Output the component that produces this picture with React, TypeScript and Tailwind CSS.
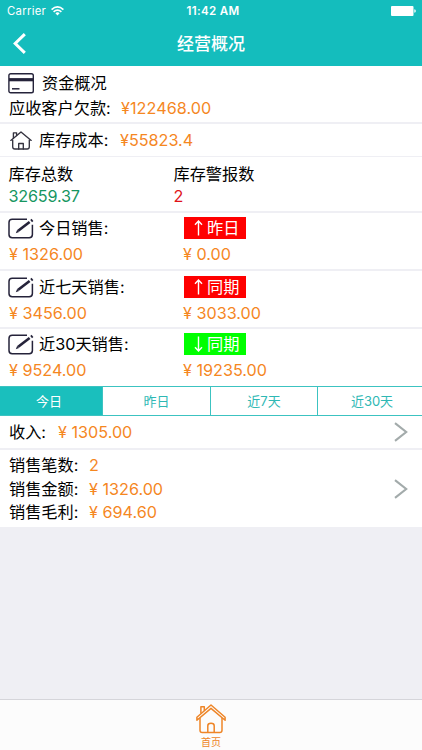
import { useState } from 'react';

const sales = [
  { label: '今日销售:', value: '¥ 1326.00', compare: '昨日', compareValue: '¥ 0.00', up: true },
  { label: '近七天销售:', value: '¥ 3456.00', compare: '同期', compareValue: '¥ 3033.00', up: true },
  { label: '近30天销售:', value: '¥ 9524.00', compare: '同期', compareValue: '¥ 19235.00', up: false },
];

const tabs = ['今日', '昨日', '近7天', '近30天'];

const totals = [
  { label: '销售笔数:', value: '2' },
  { label: '销售金额:', value: '¥ 1326.00' },
  { label: '销售毛利:', value: '¥ 694.60' },
];

const CardIcon = () => (
  <svg className="w-[26px] h-[21px] shrink-0" viewBox="0 0 26 21" fill="none" stroke="#25233a">
    <rect x="0.9" y="0.8" width="24.4" height="19" rx="1.8" strokeWidth="1.4" />
    <path d="M1 6.7h24.3" strokeWidth="3.2" />
    <path d="M4 15.8h7.5" strokeWidth="1.5" />
  </svg>
);

const HouseIcon = () => (
  <svg className="w-[22px] h-[19px] shrink-0" viewBox="0 0 22 19" fill="none" stroke="#34333f" strokeWidth="1.35" strokeLinejoin="round" strokeLinecap="round">
    <path d="M0.8 9.4L11 1l10.2 8.4" />
    <path d="M3.4 7.2V1.8h3.2v2.8" />
    <path d="M2.7 9.2v6.6q0 2.2 2.2 2.2h12.2q2.2 0 2.2-2.2V9.2" />
    <path d="M8.7 18v-5.5h4.6V18" />
  </svg>
);

const EditIcon = () => (
  <svg className="w-[26px] h-[21px] shrink-0" viewBox="0 0 26 21" fill="none" stroke="#25233a">
    <path d="M19 1.2H4.2Q1 1.2 1 4.4v12.2q0 3.2 3.2 3.2h17q3.2 0 3.2-3.2V6.8" strokeWidth="1.5" />
    <path d="M10.2 12.8L21.6 4" strokeWidth="2.7" />
    <path d="M7.8 15.2l1.4-3.5 1.9 2.3z" fill="#25233a" stroke="none" />
    <path d="M22.9 1.4l1.8 2.2" strokeWidth="1.7" />
  </svg>
);

const HomeTabIcon = () => (
  <svg className="w-[30px] h-[30px]" viewBox="0 0 30 30" fill="none" stroke="#ee8527" strokeWidth="1.5" strokeLinejoin="round">
    <path d="M15 1L0.9 13.2v3.1L15 4.4l14.1 11.9v-3.1z" />
    <path d="M4.9 9.6V2.8h3.4v3.9" />
    <path d="M4 14v12.2q0 2.3 2.3 2.3h17.4q2.3 0 2.3-2.3V14" />
    <path d="M11.8 28.3v-6.6q0-2.4 3.2-2.4t3.2 2.4v6.6" />
  </svg>
);

const Chevron = () => (
  <svg className="w-[14px] h-[20px]" viewBox="0 0 14 20" fill="none" stroke="#a3abab" strokeWidth="2.1">
    <path d="M1 1.2L12.2 10 1 18.8" />
  </svg>
);

const App = () => {
  const [active, setActive] = useState(0);

  return (
    <div className="flex flex-col w-[422px] h-[750px] overflow-hidden bg-[#efeff4] text-black text-[16.2px] leading-6 whitespace-nowrap font-['Inter','Noto_Sans_CJK_SC',sans-serif]">
      {/* Status bar and title */}
      <header className="h-[66px] shrink-0 bg-[#14bdbd] text-white">
        <div className="h-[22px] grid grid-cols-3 items-center pl-[7px] pr-[6px] text-[11.3px] leading-[22px]">
          <div className="flex items-center gap-[5px]">
            <span className="tracking-[0.3px]">Carrier</span>
            <svg className="w-[13px] h-[10px]" viewBox="0 0 13 10" fill="none" stroke="white" strokeWidth="1.7">
              <path d="M0.6 3.6Q6.5 -1.8 12.4 3.6" />
              <path d="M2.6 5.8Q6.5 2.4 10.4 5.8" />
              <path d="M4.4 7.2Q6.5 5.5 8.6 7.2L6.5 9.6z" fill="white" stroke="none" />
            </svg>
          </div>
          <span className="pl-[3px] text-center text-[11.6px] font-semibold tracking-[0.3px]">11:42 AM</span>
          <svg className="w-[25px] h-[10px] justify-self-end" viewBox="0 0 25 10" fill="white">
            <rect width="22.5" height="10" rx="1" />
            <path d="M23.3 3.2q1.5 0 1.5 1.8t-1.5 1.8z" />
          </svg>
        </div>
        <div className="h-[44px] grid grid-cols-[60px_1fr_60px] items-center">
          <svg className="w-[13px] h-[21px] ml-[13px] mt-[-2px]" viewBox="0 0 13 21" fill="none" stroke="white" strokeWidth="3">
            <path d="M11.8 1.2L2.2 10.5l9.6 9.3" />
          </svg>
          <h1 className="text-center text-[17px] font-medium">经营概况</h1>
        </div>
      </header>

      {/* Funds */}
      <section className="h-[58px] shrink-0 bg-white border-b-2 border-[#efeff4] pl-[8px] pt-[5px]">
        <div className="flex items-center h-[24px] gap-[8px]">
          <CardIcon />
          <span>资金概况</span>
        </div>
        <div className="flex items-center h-[25px] pl-[1px]">
          <span className="w-[112px]">应收客户欠款:</span>
          <span className="text-[#f5871f] tracking-[0.05px]">¥122468.00</span>
        </div>
      </section>

      {/* Stock */}
      <section className="h-[33px] shrink-0 flex items-center bg-white border-b border-[#efeff4] pl-[10px]">
        <HouseIcon />
        <span className="ml-[7px] w-[81px]">库存成本:</span>
        <span className="text-[#f5871f]">¥55823.4</span>
      </section>
      <section className="h-[56px] shrink-0 flex bg-white border-b-2 border-[#efeff4] pl-[8.5px] pt-[6px] leading-[22px]">
        <div className="w-[165px]">
          <p>库存总数</p>
          <p className="text-[#17965f] tracking-[-0.2px]">32659.37</p>
        </div>
        <div>
          <p>库存警报数</p>
          <p className="text-[#e01218]">2</p>
        </div>
      </section>

      {/* Sales compared with the previous period */}
      {sales.map((item, i) => (
        <section
          key={item.label}
          className={`shrink-0 bg-white pl-[8px] ${i === 1 ? 'pt-[4px]' : 'pt-[3px]'} ${i === 2 ? 'h-[57px]' : 'h-[58px] border-b-2 border-[#efeff4]'}`}
        >
          <div className="flex items-center h-[24px]">
            <EditIcon />
            <span className="ml-[5px] w-[145px]">{item.label}</span>
            <span className={`flex items-center self-start mt-px w-[62px] h-[22px] pl-[9px] text-white leading-[22px] ${item.up ? 'bg-[#ff0000]' : 'bg-[#00ff00]'}`}>
              <svg className="w-[11px] h-[16px] mr-[3px]" viewBox="0 0 11 16" fill="none" stroke="white" strokeWidth="1.4">
                <path d={item.up ? 'M5.5 15.5V1M2 4.8L5.5 1 9 4.8' : 'M5.5 0.5V15M2 11.2L5.5 15 9 11.2'} />
              </svg>
              {item.compare}
            </span>
          </div>
          <div className={`flex items-center text-[#f5871f] pl-[1px] ${i === 1 ? 'h-[27px]' : 'h-[28px]'}`}>
            <span className="w-[174px]">{item.value}</span>
            <span>{item.compareValue}</span>
          </div>
        </section>
      ))}

      {/* Period tabs */}
      <div className="h-[30px] shrink-0 grid grid-cols-[103px_108px_107px_104px] bg-white border-y border-[#3cc3c1] text-[13px]">
        {tabs.map((tab, i) => (
          <button
            key={tab}
            onClick={() => setActive(i)}
            className={`${i < 3 ? 'border-r border-[#3cc3c1]' : 'pl-[4px]'} ${i === 0 ? 'pr-[4px]' : ''} ${active === i ? 'bg-[#1abfbd] text-white' : 'text-[#2eb8b4]'}`}
          >
            {tab}
          </button>
        ))}
      </div>

      <section className="h-[34px] shrink-0 flex items-center justify-between bg-white border-b-2 border-[#efeff4] pl-[9px] pr-[14px]">
        <div className="flex">
          <span className="w-[49px]">收入:</span>
          <span className="text-[#f5871f]">¥ 1305.00</span>
        </div>
        <Chevron />
      </section>
      <section className="h-[77px] shrink-0 flex items-center justify-between bg-white pl-[9px] pr-[14px]">
        <div className="leading-[23.5px] pt-[2px]">
          {totals.map((row) => (
            <div key={row.label} className="flex">
              <span className="w-[80px]">{row.label}</span>
              <span className="text-[#f5871f]">{row.value}</span>
            </div>
          ))}
        </div>
        <Chevron />
      </section>

      {/* Bottom bar */}
      <footer className="mt-auto h-[51px] shrink-0 flex flex-col items-center bg-[#fcfcfc] border-t border-[#d5d5da] pt-[4px] text-[#ee8527]">
        <HomeTabIcon />
        <span className="text-[10px] leading-[14px] mt-[1px]">首页</span>
      </footer>
    </div>
  );
};

export default App;
